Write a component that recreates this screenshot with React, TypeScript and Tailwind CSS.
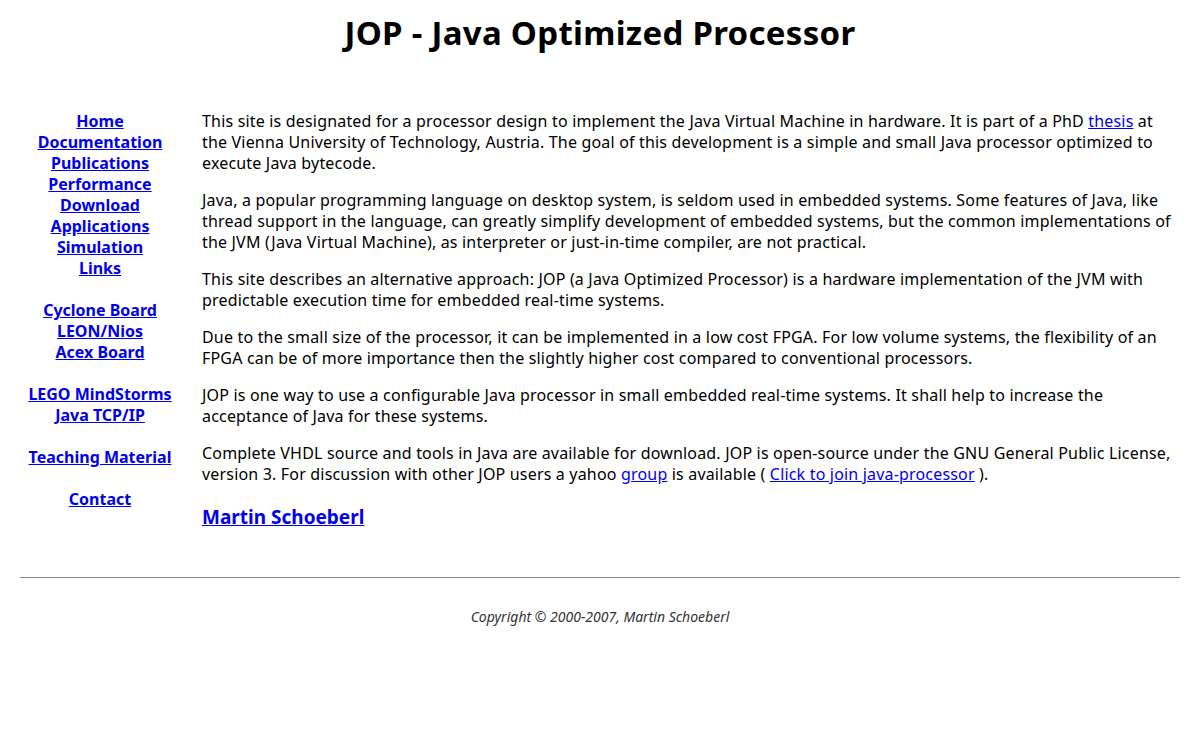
import React from "react";

const navGroups: string[][] = [
  ["Home", "Documentation", "Publications", "Performance", "Download", "Applications", "Simulation", "Links"],
  ["Cyclone Board", "LEON/Nios", "Acex Board"],
  ["LEGO MindStorms", "Java TCP/IP"],
  ["Teaching Material"],
  ["Contact"],
];

const A = ({ children }: { children: React.ReactNode }) => (
  <a href="#" className="text-[#0000ee] underline">
    {children}
  </a>
);

export default function App() {
  return (
    <div className="bg-white text-black min-h-[740px] px-[20px] text-[16px] leading-[21px]" style={{ fontFamily: '"Noto Sans", "Open Sans", sans-serif' }}>
      <h1 className="text-center font-bold text-[33px] tracking-[0.3px] leading-[40px] pt-[13px]">JOP - Java Optimized Processor</h1>
      <div className="flex mt-[58px]">
        <div className="w-[160px] shrink-0 text-center font-bold flex flex-col gap-[21px]">
          {navGroups.map((g, i) => (
            <div key={i} className="flex flex-col">
              {g.map((n) => (
                <div key={n}>
                  <A>{n}</A>
                </div>
              ))}
            </div>
          ))}
        </div>
        <div className="flex-1 pl-[22px] flex flex-col gap-[16px] tracking-[0.18px]">
          <p>
            This site is designated for a processor design to implement the Java Virtual Machine in hardware. It is part of a PhD <A>thesis</A> at<br />
            the Vienna University of Technology, Austria. The goal of this development is a simple and small Java processor optimized to<br />
            execute Java bytecode.
          </p>
          <p>
            Java, a popular programming language on desktop system, is seldom used in embedded systems. Some features of Java, like<br />
            thread support in the language, can greatly simplify development of embedded systems, but the common implementations of<br />
            the JVM (Java Virtual Machine), as interpreter or just-in-time compiler, are not practical.
          </p>
          <p>
            This site describes an alternative approach: JOP (a Java Optimized Processor) is a hardware implementation of the JVM with<br />
            predictable execution time for embedded real-time systems.
          </p>
          <p>
            Due to the small size of the processor, it can be implemented in a low cost FPGA. For low volume systems, the flexibility of an<br />
            FPGA can be of more importance then the slightly higher cost compared to conventional processors.
          </p>
          <p>
            JOP is one way to use a configurable Java processor in small embedded real-time systems. It shall help to increase the<br />
            acceptance of Java for these systems.
          </p>
          <p>
            Complete VHDL source and tools in Java are available for download. JOP is open-source under the GNU General Public License,<br />
            version 3. For discussion with other JOP users a yahoo <A>group</A> is available ( <A>Click to join java-processor</A> ).
          </p>
          <h3 className="font-bold text-[19px] tracking-normal leading-[26px] mt-[3px]">
            <A>Martin Schoeberl</A>
          </h3>
        </div>
      </div>
      <hr className="mt-[47px] border-0 border-t border-[#888]" />
      <p className="text-center italic text-[14px] leading-[18px] text-[#333] mt-[30px]">Copyright © 2000-2007, Martin Schoeberl</p>
    </div>
  );
}
